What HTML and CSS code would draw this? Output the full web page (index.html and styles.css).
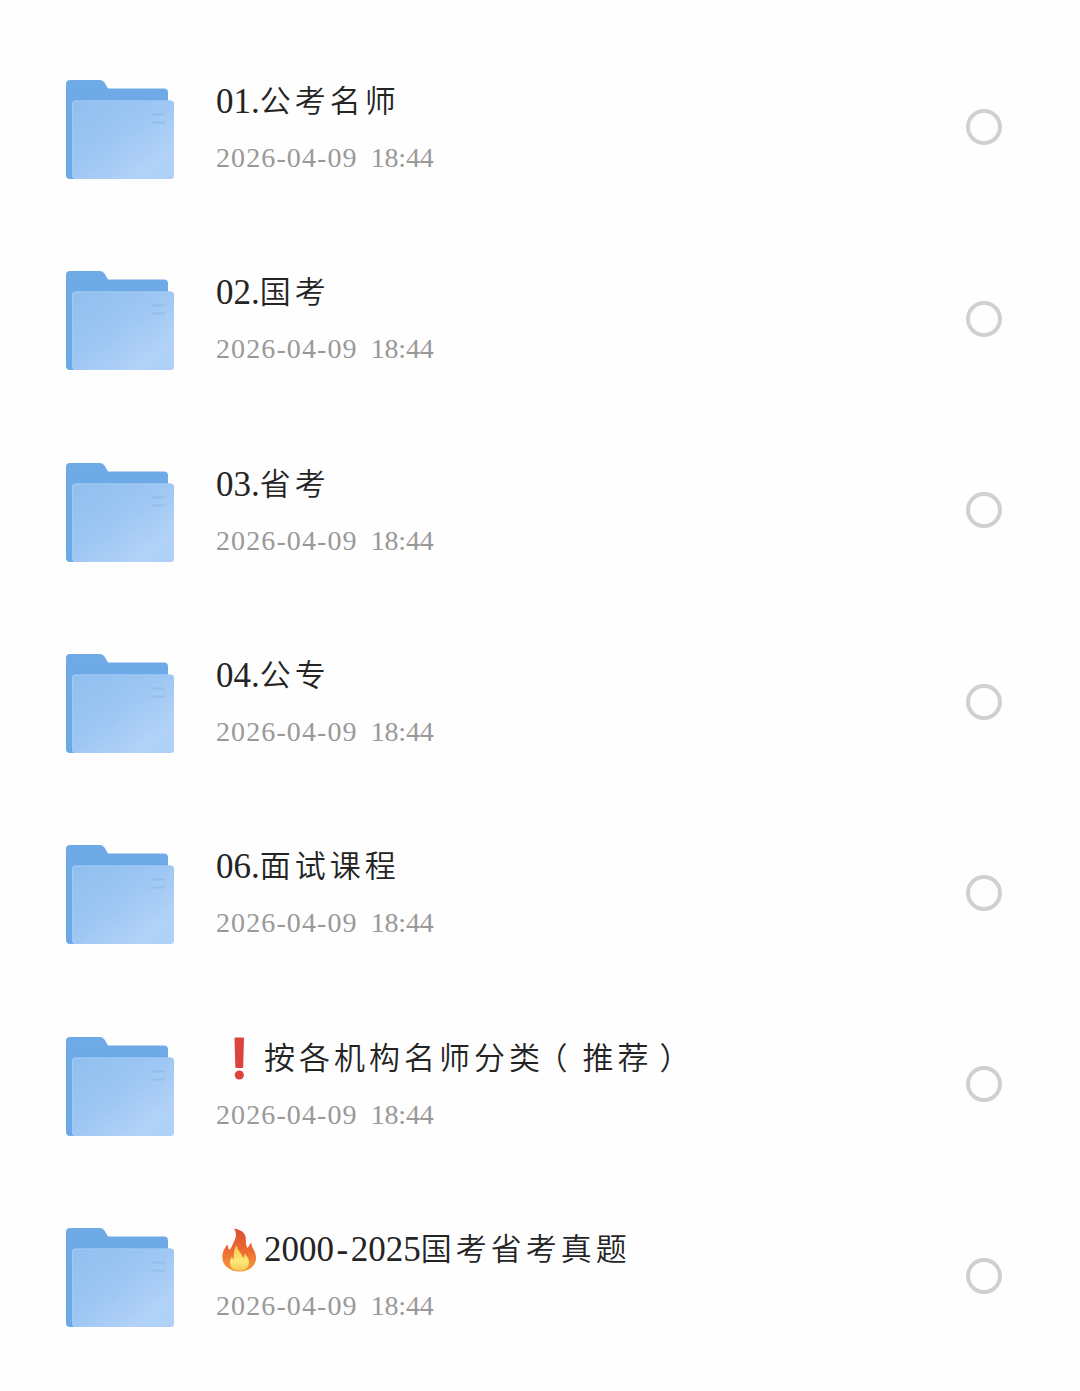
FILE: index.html
```html
<!DOCTYPE html>
<html lang="zh-CN">
<head>
  <meta charset="UTF-8">
  <title>文件列表</title>
  <link rel="stylesheet" href="styles.css">
</head>
<body>

  <!-- 文件夹图标 -->
  <svg class="sprite" width="0" height="0">
    <defs>
      <linearGradient id="back" x1="0" y1="0" x2="0" y2="1">
        <stop offset="0" stop-color="#6eaae6"/>
        <stop offset="1" stop-color="#6aa9e8"/>
      </linearGradient>
      <linearGradient id="front" x1="0" y1="0" x2="1" y2="1">
        <stop offset="0" stop-color="#8fbfef"/>
        <stop offset="0.45" stop-color="#9dc6f3"/>
        <stop offset="0.8" stop-color="#b2d2f8"/>
        <stop offset="1" stop-color="#aed0f7"/>
      </linearGradient>
      <linearGradient id="flame" x1="0" y1="0" x2="0" y2="1">
        <stop offset="0" stop-color="#dc4f37"/>
        <stop offset="0.55" stop-color="#ee6c31"/>
        <stop offset="1" stop-color="#f3a03d"/>
      </linearGradient>
      <linearGradient id="core" x1="0" y1="0" x2="0" y2="1">
        <stop offset="0" stop-color="#f9c644"/>
        <stop offset="0.65" stop-color="#fce979"/>
        <stop offset="1" stop-color="#f7c856"/>
      </linearGradient>
    </defs>
    <symbol id="folder" viewBox="0 0 108 99">
      <path fill="url(#back)" d="M4 0H34Q37 0 38.500 2.500L42 8.500H98Q102 8.500 102 12.500V94H8V99H4Q0 99 0 95V4Q0 0 4 0Z"/>
      <rect x="6" y="20.500" width="102" height="78.500" rx="3.500" fill="url(#front)"/>
      <path d="M6.700 97V24Q6.700 21.200 10 21.200H104" fill="none" stroke="#a0c9f3" stroke-width="1.300"/>
      <path d="M86.500 34.500H99M86.500 42.500H99" stroke="#8db8e9" stroke-width="2" opacity=".65"/>
    </symbol>
  </svg>

  <ul class="file-list">
    <li class="file">
      <svg class="folder"><use href="#folder"/></svg>
      <div class="info">
        <div class="name">01.<span class="han">公考名师</span></div>
        <div class="date">2026-04-09 <span class="time">18:44</span></div>
      </div>
      <span class="check"></span>
    </li>
    <li class="file">
      <svg class="folder"><use href="#folder"/></svg>
      <div class="info">
        <div class="name">02.<span class="han">国考</span></div>
        <div class="date">2026-04-09 <span class="time">18:44</span></div>
      </div>
      <span class="check"></span>
    </li>
    <li class="file">
      <svg class="folder"><use href="#folder"/></svg>
      <div class="info">
        <div class="name">03.<span class="han">省考</span></div>
        <div class="date">2026-04-09 <span class="time">18:44</span></div>
      </div>
      <span class="check"></span>
    </li>
    <li class="file">
      <svg class="folder"><use href="#folder"/></svg>
      <div class="info">
        <div class="name">04.<span class="han">公专</span></div>
        <div class="date">2026-04-09 <span class="time">18:44</span></div>
      </div>
      <span class="check"></span>
    </li>
    <li class="file">
      <svg class="folder"><use href="#folder"/></svg>
      <div class="info">
        <div class="name">06.<span class="han">面试课程</span></div>
        <div class="date">2026-04-09 <span class="time">18:44</span></div>
      </div>
      <span class="check"></span>
    </li>
    <li class="file">
      <svg class="folder"><use href="#folder"/></svg>
      <div class="info">
        <div class="name">
          <svg class="emoji" viewBox="0 0 48 44">
            <path fill="#dc453f" d="M18.500 1.500Q18.500 .5 19.500 .5H27Q28 .5 28 1.500L27.200 30Q27.200 31 26.200 31H20.300Q19.300 31 19.300 30Z"/>
            <circle cx="23.300" cy="38" r="4.600" fill="#dc453f"/>
          </svg><span class="han">按各机构名师分类<span class="open">（</span>推荐<span class="close">）</span></span>
        </div>
        <div class="date">2026-04-09 <span class="time">18:44</span></div>
      </div>
      <span class="check"></span>
    </li>
    <li class="file">
      <svg class="folder"><use href="#folder"/></svg>
      <div class="info">
        <div class="name">
          <svg class="emoji" viewBox="0 0 48 44">
            <path fill="url(#flame)" d="M18 .5C25 1.500 29.500 5 29.800 10C30 14 29.500 17 31.500 20C33 18.500 33.500 16 35.500 14.500C35 18 37 20 38.800 24C43 34 36 43.500 24 43.500C12 43.500 5 36 6.500 26.500C7.200 22 9.500 19.500 11 16.500C12.300 18 12.300 20 13 22C16 20 16.500 16 18.500 12.500C20.500 8.500 20.500 4 18 .5Z"/>
            <path fill="url(#core)" d="M21 17C20.500 22 26 25 27 30C28.500 29 28.500 27 28.500 25.500C32 29 34 33 32.500 37C31 41 27.500 42.500 24 42.500C18 42.500 13.500 39 14 34C14.200 31.500 15 30 16 28.500C16.500 30 17 31 18 31.500C17.500 26 18 20 21 17Z"/>
          </svg>2000<span class="dash">-</span>2025<span class="han">国考省考真题</span>
        </div>
        <div class="date">2026-04-09 <span class="time">18:44</span></div>
      </div>
      <span class="check"></span>
    </li>
  </ul>

</body>
</html>
```

FILE: styles.css
```css
body {
  margin: 0;
  padding: 0;
  background: #fefefe;
  font-family: "Liberation Serif", "Noto Sans CJK SC", serif;
  overflow: hidden;
}

.sprite {
  display: block;
}

.file-list {
  margin: 0;
  padding: 33.8px 78px 0 66px;
  list-style: none;
}

/* 列表行 */
.file {
  display: flex;
  align-items: center;
  height: 191.35px;
}

.folder {
  width: 108px;
  height: 99px;
  flex: none;
}

.info {
  flex: 1;
  margin-left: 42px;
  margin-bottom: 6px;
}

.name {
  height: 50px;
  line-height: 50px;
  font-size: 35px;
  color: #242424;
  white-space: nowrap;
}

.han {
  font-family: "Noto Sans CJK SC", sans-serif;
  font-size: 31px;
  font-weight: 350;
  line-height: 1;
  letter-spacing: 4px;
  vertical-align: 1px;
}

/* 半宽括号 */
.open,
.close {
  font-feature-settings: "halt";
}

.open {
  margin-left: 8px;
  margin-right: 11px;
}

.close {
  margin-left: 7px;
}

.dash {
  padding: 0 2.5px;
}

.emoji {
  width: 48px;
  height: 44px;
  vertical-align: -11px;
}

.date {
  margin-top: 13px;
  height: 36px;
  line-height: 36px;
  font-size: 28px;
  letter-spacing: 1.1px;
  word-spacing: 5px;
  color: #999;
}

.time {
  letter-spacing: -0.2px;
}

.check {
  box-sizing: border-box;
  width: 36px;
  height: 36px;
  margin-bottom: 4px;
  border: 4px solid #d0d0d0;
  border-radius: 50%;
}
```
